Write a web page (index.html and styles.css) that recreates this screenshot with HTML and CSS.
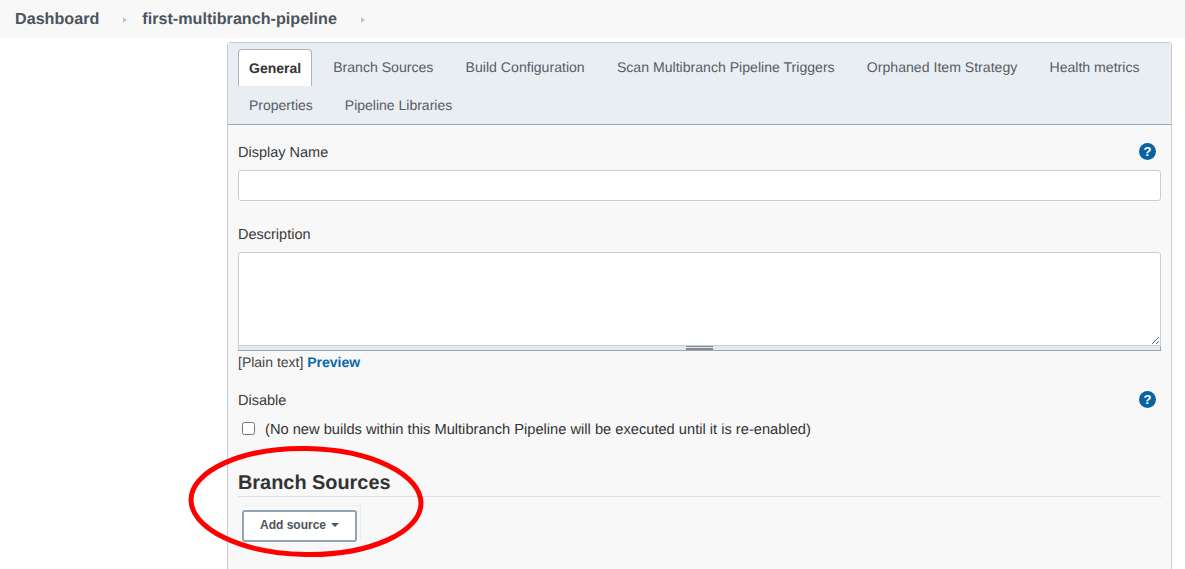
FILE: index.html
```html
<!DOCTYPE html>
<html lang="en">
<head>
<meta charset="utf-8">
<title>first-multibranch-pipeline</title>
<link rel="stylesheet" href="styles.css">
</head>
<body>
<nav class="crumbs">
  <a class="crumb">Dashboard</a><span class="sep"></span>
  <a class="crumb crumb-job">first-multibranch-pipeline</a><span class="sep"></span>
</nav>
<main class="panel">
  <div class="tabs">
    <a class="tab active">General</a>
    <a class="tab">Branch Sources</a>
    <a class="tab">Build Configuration</a>
    <a class="tab">Scan Multibranch Pipeline Triggers</a>
    <a class="tab">Orphaned Item Strategy</a>
    <a class="tab">Health metrics</a>
    <a class="tab tab-second">Properties</a>
    <a class="tab tab-second">Pipeline Libraries</a>
  </div>
  <div class="form">
    <div class="label-row label-name">
      <label>Display Name</label>
      <span class="help">?</span>
    </div>
    <input class="field" type="text">
    <div class="label-row label-desc"><label>Description</label></div>
    <div class="area-wrap">
      <textarea class="area"></textarea>
      <div class="grip"><span></span></div>
    </div>
    <div class="preview">[Plain text] <a>Preview</a></div>
    <div class="label-row label-disable">
      <label>Disable</label>
      <span class="help">?</span>
    </div>
    <label class="check"><input type="checkbox"><span>(No new builds within this Multibranch Pipeline will be executed until it is re-enabled)</span></label>
    <h2 class="section">Branch Sources</h2>
    <div class="add-wrap"><button class="add" type="button">Add source<i class="caret"></i></button></div>
  </div>
</main>
<svg class="circle" width="1185" height="569" viewBox="0 0 1185 569"><ellipse cx="306" cy="501.5" rx="115" ry="53" fill="none" stroke="#f00" stroke-width="5" transform="rotate(1 306 501.5)"/></svg>
</body>
</html>
```

FILE: styles.css
```css
* { box-sizing: border-box; }
html, body { height: 100%; }
body {
  margin: 0;
  overflow: hidden;
  background: #fff;
  color: #333;
  font-family: "Liberation Sans", Arial, sans-serif;
  font-size: 14px;
  text-rendering: geometricPrecision;
}
.crumbs {
  display: flex;
  align-items: center;
  height: 38px;
  padding: 1px 0 0 15px;
  background: #f8f8f8;
}
.crumb {
  font-size: 16.15px;
  font-weight: 700;
  color: #4d545d;
}
.sep {
  width: 0;
  height: 0;
  margin: 0 15px 0 24px;
  border-left: 4px solid #c4c4c4;
  border-top: 3.5px solid transparent;
  border-bottom: 3.5px solid transparent;
}
.panel {
  width: 945px;
  height: 540px;
  margin: 4px 0 0 227px;
  background: #f8f8f8;
  border: 1px solid #c8ccd0;
  border-radius: 3px 3px 0 0;
}
.tabs {
  display: flex;
  flex-wrap: wrap;
  align-content: flex-start;
  height: 82px;
  padding: 6px 0 0 10px;
  background: #e9eef3;
  border-bottom: 1px solid #9aa7b4;
}
.tab {
  display: block;
  height: 37px;
  margin-right: 10.2px;
  padding: 0 11px;
  font-size: 14.1px;
  line-height: 36px;
  color: #565d66;
  white-space: nowrap;
}
.tab.active {
  height: 37px;
  margin-right: 10px;
  font-size: 14px;
  color: #333;
  font-weight: 700;
  background: #fff;
  border: 1px solid #a9b4bf;
  border-bottom: 0;
  border-radius: 4px 4px 0 0;
  padding-left: 10px;
  padding-right: 10px;
}
.tab-second { margin-top: 1px; font-size: 14px; margin-right: 10px; }
.form { padding: 0 10px; }
.label-row {
  display: flex;
  justify-content: space-between;
  align-items: center;
  height: 18px;
  color: #3a3a3a;
  font-size: 14.5px;
}
.label-row label { margin-top: 2px; }
.label-name { margin-top: 18px; padding-right: 5px; }
.label-desc { margin-top: 24px; }
.label-disable { margin-top: 20px; padding-right: 5px; }
.help {
  width: 17px;
  height: 17px;
  margin-top: -2px;
  border-radius: 50%;
  background: #0a639f;
  color: #fff;
  font-size: 13px;
  font-weight: 700;
  line-height: 17px;
  text-align: center;
}
.field {
  display: block;
  width: 100%;
  height: 31px;
  margin-top: 9px;
  background: #fff;
  border: 1px solid #c9ced3;
  border-radius: 3px;
  outline: 0;
}
.area-wrap { margin-top: 9px; }
.area {
  display: block;
  width: 100%;
  height: 94px;
  background: #fff;
  border: 1px solid #c9ced3;
  border-radius: 3px 3px 0 0;
  outline: 0;
}
.grip {
  display: flex;
  justify-content: center;
  align-items: center;
  height: 5px;
  background: #e4e9ee;
  border-bottom: 1px solid #9aa7b4;
  border-right: 1px solid #9aa7b4;
  border-left: 1px solid #c9ced3;
}
.grip span {
  width: 27px;
  height: 4px;
  border-top: 1px solid #888;
  border-bottom: 2px solid #888;
}
.preview { margin-top: 3px; height: 17px; line-height: 17px; color: #444; }
.preview a { font-weight: 700; color: #0b6aa5; }
.check {
  display: flex;
  align-items: center;
  margin-top: 10px;
  height: 20px;
  color: #333;
  font-size: 14.67px;
}
.check span { margin-top: 2px; }
.check input {
  width: 13px;
  height: 13px;
  margin: -2px 10px 0 4px;
}
.section {
  margin: 28px 0 0;
  height: 30px;
  padding-top: 4px;
  font-size: 19.9px;
  line-height: 24px;
  font-weight: 700;
  color: #333;
  border-bottom: 1px solid #dfe2e5;
}
.add-wrap {
  width: 119px;
  height: 36px;
  margin: 8px 0 0 4px;
  padding-top: 4px;
  border-top: 1px solid #edf0f3;
  border-right: 1px solid #e6ebf0;
}
.add {
  display: flex;
  align-items: center;
  justify-content: center;
  width: 115px;
  height: 32px;
  padding: 0 0 2px;
  background: #fff;
  border: 2px solid #94a2b1;
  border-radius: 3px;
  color: #4d545d;
  font-family: inherit;
  font-size: 12px;
  font-weight: 700;
}
.caret {
  width: 0;
  height: 0;
  margin-left: 5px;
  border-top: 4px solid #4d545d;
  border-left: 4px solid transparent;
  border-right: 4px solid transparent;
}
.circle {
  position: absolute;
  top: 0;
  left: 0;
  pointer-events: none;
}
```
